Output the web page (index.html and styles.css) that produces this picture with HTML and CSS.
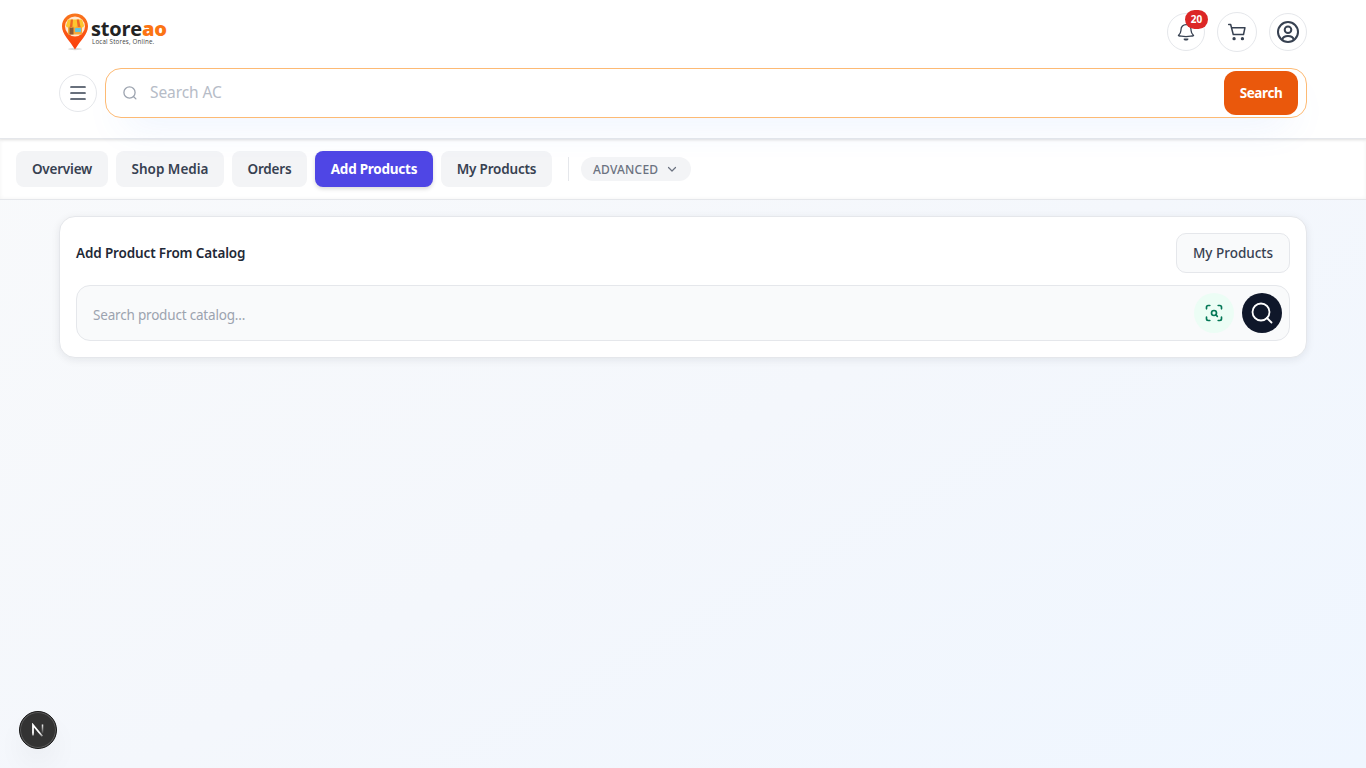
FILE: index.html
```html
<!DOCTYPE html>
<html lang="en">
<head>
    <meta charset="UTF-8">
    <title>Storeao - Add Products</title>
    <link rel="stylesheet" href="styles.css">
</head>
<body>

    <header class="header">
        <div class="header-top">
            <a class="logo" href="#">
                <svg class="logo-pin" width="28" height="38" viewBox="0 0 28 38">
                    <defs>
                        <linearGradient id="pin" x1="0" y1="0" x2="0" y2="1">
                            <stop offset="0" stop-color="#f9761d"/>
                            <stop offset="1" stop-color="#fb3b0c"/>
                        </linearGradient>
                    </defs>
                    <ellipse cx="14" cy="36" rx="7" ry="1.2" fill="#dddddd"/>
                    <path d="M14 .5C6.500.5 1 6 1 13.200c0 8 7.500 14 13 23.300 5.500-9.300 13-15.300 13-23.300C27 6 21.500.5 14 .5z" fill="url(#pin)"/>
                    <circle cx="14" cy="13.500" r="10" fill="#ffe9d0"/>
                    <path d="M7 12h14v9.500H7z" fill="#f5a93b"/>
                    <path d="M8.500 14.500h4v7h-4z" fill="#8a5a36"/>
                    <path d="M14 15h6v4h-6z" fill="#63c5dc"/>
                    <path d="M7 6.500h14l2 6c0 2.500-3.600 2.500-3.600 0 0 2.500-3.600 2.500-3.600 0 0 2.500-3.600 2.500-3.600 0 0 2.500-3.600 2.500-3.600 0 0 2.500-3.600 2.500-3.600 0z" fill="#fdc62f"/>
                    <path d="M9.800 6.500h2.200l-.6 7.500-2.600.2zM15.700 6.500h2.300l1.500 7.500-2.800.2z" fill="#ee6a22"/>
                </svg>
                <span class="logo-text">
                    <span class="logo-name">store<b>ao</b></span>
                    <span class="logo-tag">Local Stores, Online.</span>
                </span>
            </a>

            <div class="header-icons">
                <button class="circle">
                    <svg width="20" height="20" viewBox="0 0 24 24" class="line thin">
                        <path d="M18 9.750V9A6 6 0 0 0 6 9v.75a9 9 0 0 1-3.100 6.500q1.500.5 3.400.800 5.700.9 11.400 0 1.900-.3 3.400-.8A9 9 0 0 1 18 9.750z"/>
                        <path d="M9.800 20.400c1.200 1.500 3.200 1.500 4.400 0z" fill="currentColor"/>
                    </svg>
                    <span class="badge">20</span>
                </button>
                <button class="circle big">
                    <svg width="20" height="20" viewBox="0 0 24 24" class="line">
                        <path d="M2 3h2.400l3.100 12h12.300L21.500 7H5.500"/>
                        <circle cx="8.500" cy="20" r="1.100" fill="currentColor"/>
                        <circle cx="18.500" cy="20" r="1.100" fill="currentColor"/>
                    </svg>
                </button>
                <button class="circle">
                    <svg width="24" height="24" viewBox="0 0 24 24" class="line user">
                        <circle cx="12" cy="12" r="10"/>
                        <circle cx="12" cy="9.700" r="3.300"/>
                        <path d="M6.300 19.400c.8-2.700 3-3.400 5.700-3.400s4.900.7 5.700 3.400"/>
                    </svg>
                </button>
            </div>
        </div>

        <div class="search-row">
            <button class="circle">
                <svg width="16" height="16" viewBox="0 0 16 16" class="line bars">
                    <path d="M1 2h14M1 8h14M1 14h14"/>
                </svg>
            </button>
            <form class="search">
                <svg width="16" height="16" viewBox="0 0 16 16" class="line glass">
                    <circle cx="7.500" cy="7.500" r="5.600"/>
                    <path d="M11.700 11.700l2.200 2.200"/>
                </svg>
                <input type="text" placeholder="Search AC">
                <button type="button" class="search-btn">Search</button>
            </form>
        </div>
    </header>

    <nav class="tabs">
        <a class="tab overview" href="#">Overview</a>
        <a class="tab media" href="#">Shop Media</a>
        <a class="tab orders" href="#">Orders</a>
        <a class="tab add active" href="#">Add Products</a>
        <a class="tab products" href="#">My Products</a>
        <span class="divider"></span>
        <button class="advanced">
            ADVANCED
            <svg width="12" height="12" viewBox="0 0 12 12" class="line chevron">
                <path d="M2.500 4.500L6 8l3.500-3.500"/>
            </svg>
        </button>
    </nav>

    <main class="content">
        <section class="card">
            <div class="card-head">
                <h2>Add Product From Catalog</h2>
                <a class="my-products" href="#">My Products</a>
            </div>
            <div class="catalog">
                <input type="text" placeholder="Search product catalog...">
                <button class="round scan">
                    <svg width="20" height="20" viewBox="0 0 24 24" class="line">
                        <path d="M3 7V5a2 2 0 0 1 2-2h2M17 3h2a2 2 0 0 1 2 2v2M21 17v2a2 2 0 0 1-2 2h-2M7 21H5a2 2 0 0 1-2-2v-2"/>
                        <circle cx="12" cy="12" r="3"/>
                        <path d="M16 16l-1.900-1.900"/>
                    </svg>
                </button>
                <button class="round find">
                    <svg width="24" height="24" viewBox="0 0 24 24" class="line">
                        <circle cx="11" cy="11" r="8.500"/>
                        <path d="M17 17l4.500 4.500"/>
                    </svg>
                </button>
            </div>
        </section>
    </main>

    <button class="dev-badge">
        <svg width="14" height="14" viewBox="0 0 14 14">
            <defs>
                <linearGradient id="fade" x1="0" y1="0" x2="0" y2="14" gradientUnits="userSpaceOnUse">
                    <stop offset=".7" stop-color="#fff"/>
                    <stop offset="1" stop-color="#fff" stop-opacity=".3"/>
                </linearGradient>
                <linearGradient id="fade2" x1="0" y1="1" x2="0" y2="11" gradientUnits="userSpaceOnUse">
                    <stop offset="0" stop-color="#fff"/>
                    <stop offset="1" stop-color="#fff" stop-opacity="0"/>
                </linearGradient>
            </defs>
            <path d="M2 12.500V2l9.300 11.300" fill="none" stroke="url(#fade)" stroke-width="1.800"/>
            <path d="M11.500 1.500v9" fill="none" stroke="url(#fade2)" stroke-width="1.500"/>
        </svg>
    </button>

</body>
</html>
```
FILE: styles.css
```css
* {
    box-sizing: border-box;
}

body {
    margin: 0;
    min-height: 768px;
    font-family: "Segoe UI", "Noto Sans", sans-serif;
    font-size: 13.5px;
    color: #374151;
    background: linear-gradient(to bottom right, #f9fafb 0%, #f4f7fc 55%, #eff6ff 100%);
}

button,
input {
    font-family: inherit;
    padding: 0;
    border: none;
    outline: none;
    background: none;
}

button {
    color: inherit;
    cursor: pointer;
}

a {
    color: inherit;
    text-decoration: none;
}

.line {
    fill: none;
    stroke: currentColor;
    stroke-width: 1.8;
    stroke-linecap: round;
    stroke-linejoin: round;
}

.thin {
    stroke-width: 1.5;
}

/* header */
.header {
    position: relative;
    height: 139px;
    padding: 12px 59px 0;
    background: #fff;
    border-bottom: 1px solid #e5e7eb;
    box-shadow: 0 1px 3px rgba(0, 0, 0, 0.1);
    z-index: 1;
}

.header-top {
    display: flex;
    justify-content: space-between;
    height: 56px;
}

.logo {
    display: flex;
    margin-left: 2px;
    height: 38px;
}

.logo-pin {
    margin-top: 1px;
}

.logo-text {
    display: flex;
    flex-direction: column;
    margin-left: 2px;
    padding-top: 7px;
}

.logo-name {
    font: 700 20px/19px "Open Sans", sans-serif;
    letter-spacing: -0.2px;
    color: #232323;
}

.logo-name b {
    color: #fb7414;
}

.logo-tag {
    margin-left: 1px;
    font: 6.2px/8px "Open Sans", sans-serif;
    letter-spacing: 0.18px;
    color: #444;
}

.header-icons {
    display: flex;
    align-items: center;
    gap: 12px;
    height: 40px;
}

.circle {
    position: relative;
    display: flex;
    align-items: center;
    justify-content: center;
    flex: none;
    width: 38px;
    height: 38px;
    border: 1px solid #e5e7eb;
    border-radius: 50%;
    background: #fff;
}

.circle.big {
    width: 40px;
    height: 40px;
}

.user {
    stroke-width: 2;
}

.badge {
    position: absolute;
    top: -4px;
    right: -4px;
    width: 23px;
    height: 19px;
    border-radius: 10px;
    background: #dc2626;
    color: #fff;
    font-size: 10px;
    font-weight: 700;
    line-height: 19px;
    text-align: center;
}

.search-row {
    display: flex;
    align-items: center;
    gap: 8px;
}

.bars {
    stroke-width: 1.7;
}

.search {
    display: flex;
    align-items: center;
    flex: 1;
    height: 50px;
    padding: 0 8px 0 16px;
    border: 1px solid #fdba74;
    border-radius: 16px;
    background: #fff;
    box-shadow: 0 18px 40px -18px rgba(59, 130, 246, 0.2);
}

.glass {
    color: #9ca3af;
    stroke-width: 1.3;
}

.search input {
    flex: 1;
    margin: 0 0 3px 12px;
    font-size: 15.5px;
    letter-spacing: -0.1px;
}

.search input::placeholder {
    color: #b6bcc7;
}

.search-btn {
    width: 74px;
    height: 44px;
    padding-bottom: 1px;
    border-radius: 12px;
    background: #ea580c;
    color: #fff;
    font-size: 13.5px;
    font-weight: 700;
    letter-spacing: -0.4px;
}

/* tabs */
.tabs {
    display: flex;
    align-items: center;
    gap: 8px;
    height: 61px;
    padding: 1px 16px 1px;
    background: #fff;
    border-bottom: 1px solid #e5e7eb;
    box-shadow: inset 0 0 4px rgba(0, 0, 0, 0.05);
}

.tab {
    height: 36px;
    border-radius: 8px;
    background: #f3f4f6;
    font-weight: 600;
    line-height: 36px;
    text-align: center;
    letter-spacing: -0.2px;
}

.overview {
    width: 92px;
}

.media {
    width: 108px;
    letter-spacing: 0;
}

.orders {
    width: 75px;
}

.add {
    width: 118px;
}

.products {
    width: 111px;
}

.tab.active {
    background: #4f46e5;
    color: #fff;
    font-weight: 700;
    letter-spacing: -0.25px;
    box-shadow: 0 2px 4px rgba(0, 0, 0, 0.15);
}

.divider {
    width: 1px;
    height: 24px;
    margin: 0 4px 0 8px;
    background: #e5e7eb;
}

.advanced {
    display: flex;
    align-items: center;
    justify-content: space-between;
    width: 110px;
    height: 24px;
    padding: 0 13px 0 12px;
    border-radius: 12px;
    background: #f3f4f6;
    color: #6b7280;
    font-size: 12px;
    font-weight: 500;
    letter-spacing: 0.2px;
}

.chevron {
    stroke-width: 1.2;
}

/* catalog card */
.content {
    padding: 16px 59px;
}

.card {
    height: 142px;
    padding: 16px;
    border: 1px solid #e5e7eb;
    border-radius: 16px;
    background: #fff;
    box-shadow: 0 2px 8px rgba(15, 23, 42, 0.08);
}

.card-head {
    display: flex;
    align-items: center;
    justify-content: space-between;
    margin-bottom: 12px;
}

.card h2 {
    margin: 0;
    color: #1f2937;
    font-size: 13.5px;
    font-weight: 600;
    letter-spacing: -0.14px;
}

.my-products {
    width: 114px;
    height: 40px;
    border: 1px solid #e5e7eb;
    border-radius: 10px;
    background: #f9fafb;
    font-weight: 500;
    line-height: 38px;
    text-align: center;
}

.catalog {
    display: flex;
    align-items: center;
    gap: 8px;
    height: 56px;
    padding: 0 7px 0 16px;
    border: 1px solid #e5e7eb;
    border-radius: 14px;
    background: #f9fafb;
}

.catalog input {
    flex: 1;
    padding-top: 3px;
    font-size: 13.5px;
    letter-spacing: -0.19px;
}

.catalog input::placeholder {
    color: #9ca3af;
}

.round {
    display: flex;
    align-items: center;
    justify-content: center;
    width: 40px;
    height: 40px;
    border-radius: 50%;
}

.scan {
    background: #ecfdf5;
    color: #047857;
}

.scan svg {
    stroke-width: 2;
}

.find {
    background: #0f172a;
    color: #fff;
}

/* floating dev button */
.dev-badge {
    position: fixed;
    left: 19px;
    bottom: 19px;
    display: flex;
    align-items: center;
    justify-content: center;
    width: 38px;
    height: 38px;
    border: 1px solid #171717;
    border-radius: 50%;
    background: #333;
    box-shadow: inset 0 0 0 1px #5a5a5a, 0 16px 32px -8px rgba(0, 0, 0, 0.12);
}
```
